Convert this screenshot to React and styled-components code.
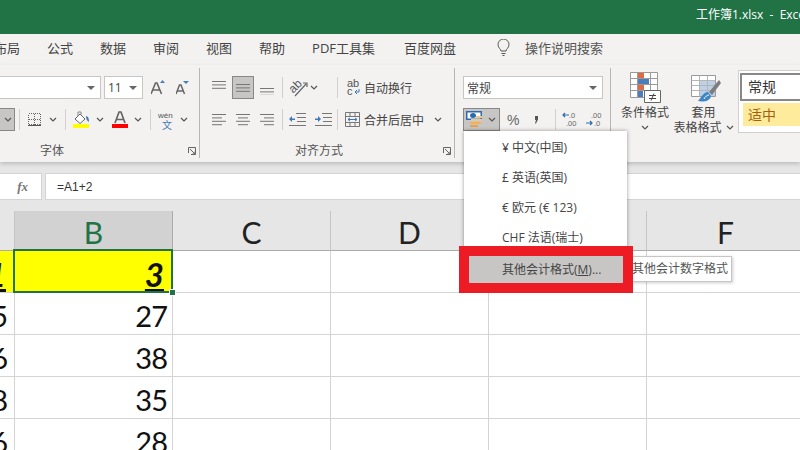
import React from 'react';
import styled, { createGlobalStyle } from 'styled-components';

const GlobalStyle = createGlobalStyle`
  html, body {
    margin: 0;
    padding: 0;
    background: #e6e6e6;
  }
`;

const uiFont = `"Open Sans", "Noto Sans CJK SC", sans-serif`;
const cellFont = `Lato, "Liberation Sans", sans-serif`;

const Page = styled.div`
  position: relative;
  display: flex;
  flex-direction: column;
  width: 800px;
  height: 450px;
  overflow: hidden;
  background: #e6e6e6;
  font-family: ${ uiFont };
  font-size: 12px;
  color: #444;
`;

const TitleBar = styled.div`
  flex: none;
  height: 34px;
  padding: 6px 0 0 696px;
  box-sizing: border-box;
  background: #217346;
  color: #fff;
  font-size: 12px;
  line-height: 18px;
  white-space: pre;
`;

const TabBar = styled.div`
  flex: none;
  display: flex;
  align-items: center;
  gap: 27px;
  height: 31px;
  margin-left: -6px;
  padding-bottom: 4px;
  box-sizing: border-box;
  background: #f3f2f1;
  font-size: 13px;
  color: #444;
`;

const Tab = styled.span`
  white-space: nowrap;
  margin-left: ${ p => p.$nudge ?? 0 }px;
`;

const SearchTab = styled.span`
  display: flex;
  align-items: center;
  gap: 15px;
  margin-left: 14px;
  color: #555;
`;

const Ribbon = styled.div`
  flex: none;
  position: relative;
  display: flex;
  height: 97px;
  background: #f3f2f1;
  box-shadow: 0 2px 4px rgba(0, 0, 0, 0.18);
`;

const Group = styled.div`
  flex: none;
  display: flex;
  flex-direction: column;
  gap: 9px;
  width: ${ p => p.$width }px;
  height: 90px;
  margin-top: 3px;
  padding-top: 8px;
  box-sizing: border-box;
  border-right: 1px solid #b8b6b4;
  overflow: hidden;
`;

const Row = styled.div`
  display: flex;
  align-items: center;
  justify-content: ${ p => p.$end ? 'flex-end' : 'flex-start' };
  flex: none;
  gap: ${ p => p.$gap ?? 0 }px;
  height: 23px;
  padding: ${ p => p.$end ? '0 6px 0 0' : `0 0 0 ${ p.$left ?? 0 }px` };
`;

const LabelRow = styled.div`
  display: flex;
  align-items: center;
  flex: none;
  height: 14px;
  margin-top: auto;
  padding-left: ${ p => p.$left }px;
  padding-right: 3px;
  font-size: 12px;
  line-height: 14px;
  color: #555;
`;

const Launcher = styled.span`
  display: flex;
  margin-left: auto;
`;

const ComboBox = styled.div`
  flex: none;
  display: flex;
  align-items: center;
  justify-content: space-between;
  width: ${ p => p.$width }px;
  height: 23px;
  margin-left: ${ p => p.$left ?? 0 }px;
  padding: 0 5px 0 3px;
  box-sizing: border-box;
  background: #fff;
  border: 1px solid #c8c6c4;
  color: #444;
  font-size: 12px;
`;

const Tool = styled.div`
  flex: none;
  display: flex;
  align-items: center;
  justify-content: ${ p => p.$pad === undefined ? 'center' : 'flex-start' };
  gap: ${ p => p.$gap ?? 0 }px;
  width: ${ p => p.$width }px;
  height: 23px;
  margin-left: ${ p => p.$left ?? 0 }px;
  padding-left: ${ p => p.$pad ?? 0 }px;
  box-sizing: border-box;
  white-space: nowrap;
  font-size: 12px;
  color: #444;
  background: ${ p => p.$active ? '#c8c6c4' : 'transparent' };
  border: ${ p => p.$active ? '1px solid #8a8886' : 'none' };
`;

const ChevronSlot = styled.span`
  display: flex;
  margin-left: 6px;
`;

const Sep = styled.span`
  flex: none;
  width: 1px;
  height: 21px;
  margin-left: ${ p => p.$left ?? 0 }px;
  background: #d2d0ce;
`;

const BigTool = styled.div`
  flex: none;
  display: flex;
  flex-direction: column;
  align-items: center;
  width: ${ p => p.$width }px;
  font-size: 12px;
  line-height: 15px;
  color: #444;
  white-space: nowrap;
`;

const BigIcon = styled.div`
  height: 33px;
`;

const BigLabel = styled.div`
  display: flex;
  align-items: center;
  gap: 4px;
  height: 15px;
`;

const StyleColumn = styled.div`
  display: flex;
  align-items: flex-start;
  height: 82px;
  margin-top: 7px;
  padding-left: 5px;
`;

const StyleBox = styled.div`
  flex: none;
  width: 80px;
  height: 63px;
  margin: -2px 0 0 5px;
  padding: 2px 0 0 1px;
  box-sizing: border-box;
  background: #fff;
  border: 1px solid #d2d0ce;
  border-right: none;
`;

const StyleNormal = styled.div`
  height: 28px;
  padding-left: 6px;
  box-sizing: border-box;
  border: 2px solid #8a8886;
  border-right: none;
  font-size: 14px;
  line-height: 24px;
  color: #333;
`;

const StyleNeutral = styled.div`
  height: 23px;
  margin: 2px 0 0 3px;
  padding-left: 5px;
  background: #ffeb9c;
  font-size: 14px;
  line-height: 23px;
  color: #a85f0a;
`;

const FormulaBar = styled.div`
  flex: none;
  display: flex;
  gap: 3px;
  height: 49px;
  padding: 11px 0;
  box-sizing: border-box;
`;

const NameBox = styled.div`
  flex: none;
  display: flex;
  align-items: center;
  justify-content: flex-end;
  width: 42px;
  padding-right: 13px;
  box-sizing: border-box;
  background: #fff;
  border: 1px solid #d4d4d4;
  border-left: none;
  font-family: "Liberation Serif", serif;
  font-style: italic;
  font-weight: bold;
  font-size: 13px;
  color: #777;
`;

const FormulaInput = styled.div`
  flex: 1;
  display: flex;
  align-items: center;
  padding: 1px 0 0 11px;
  background: #fff;
  border: 1px solid #d4d4d4;
  border-right: none;
  font-family: "Liberation Sans", sans-serif;
  font-size: 12px;
  color: #333;
`;

const Sheet = styled.div`
  flex: none;
  display: grid;
  grid-template-columns: 15px repeat(5, 158px);
  grid-template-rows: 40px repeat(5, 42px);
  background: #fff;
  font-family: ${ cellFont };
`;

const ColHead = styled.div`
  display: flex;
  align-items: center;
  justify-content: center;
  padding-top: 2px;
  box-sizing: border-box;
  font-size: 30px;
  background: ${ p => p.$selected ? '#d2d2d2' : '#e6e6e6' };
  color: ${ p => p.$selected ? '#217346' : '#222' };
  border-right: 1px solid ${ p => p.$selected ? '#ababab' : '#c6c6c6' };
  border-bottom: 1px solid #ababab;
`;

const Cell = styled.div`
  position: relative;
  z-index: ${ p => p.$fill ? 1 : 0 };
  display: flex;
  align-items: center;
  justify-content: flex-end;
  padding: 4px ${ p => p.$pad ?? 6 }px 0 0;
  box-sizing: border-box;
  font-size: 29px;
  letter-spacing: -1px;
  color: #111;
  background: ${ p => p.$fill ? '#ffff00' : '#fff' };
  border-right: 1px solid #d4d4d4;
  border-bottom: 1px solid #d4d4d4;
`;

const Emphasis = styled.span`
  font-size: 33px;
  font-weight: bold;
  font-style: italic;
  letter-spacing: 0;
  line-height: 34px;
  text-decoration: underline;
`;

const Selection = styled.div`
  position: absolute;
  inset: -2px -1px -1px -2px;
  border: 2px solid #217346;
`;

const FillHandle = styled.div`
  position: absolute;
  right: -5px;
  bottom: -5px;
  width: 7px;
  height: 7px;
  background: #217346;
  border: 1px solid #fff;
  box-sizing: border-box;
`;

const Menu = styled.div`
  position: absolute;
  left: 464px;
  top: 131px;
  width: 163px;
  height: 156px;
  padding-top: 2px;
  box-sizing: border-box;
  background: #fff;
  box-shadow: 0 0 4px rgba(0, 0, 0, 0.4);
`;

const MenuItem = styled.div`
  height: ${ p => p.$active ? 27 : 30 }px;
  margin: ${ p => p.$active ? '3px 4px 0 5px' : '0' };
  padding-left: ${ p => p.$active ? 33 : 38 }px;
  font-size: 12px;
  line-height: ${ p => p.$active ? 28 : 30 }px;
  color: #444;
  white-space: nowrap;
  background: ${ p => p.$active ? '#c8c6c4' : 'transparent' };
`;

const Mnemonic = styled.span`
  text-decoration: underline;
`;

const Tooltip = styled.div`
  position: absolute;
  left: 629px;
  top: 256px;
  width: 103px;
  height: 26px;
  padding-left: 2px;
  box-sizing: border-box;
  background: #fff;
  border: 1px solid #c8c6c4;
  box-shadow: 1px 1px 3px rgba(0, 0, 0, 0.2);
  font-size: 12px;
  line-height: 24px;
  color: #555;
  white-space: nowrap;
`;

const Callout = styled.div`
  position: absolute;
  left: 459px;
  top: 246px;
  width: 174px;
  height: 47px;
  box-sizing: border-box;
  border: 10px solid #ed1c24;
`;

const Chevron = () => (
  <svg width='8' height='5' viewBox='0 0 8 5'>
    <path d='M1 1l3 3 3-3' fill='none' stroke='#555' strokeWidth='1.2' />
  </svg>
);

const Caret = () => (
  <svg width='8' height='4' viewBox='0 0 8 4'>
    <path d='M0 0h8L4 4z' fill='#666' />
  </svg>
);

const DialogLauncher = () => (
  <svg width='8' height='8' viewBox='0 0 8 8'>
    <path d='M.5 6V.5H7.500V7.500H3M2 2l5 5M4.500 7H7V4.500' fill='none' stroke='#666' />
  </svg>
);

// each row is [x, width], drawn a little over 3px apart
const Lines = ({ rows, y = 0, h = 15 }) => (
  <svg width='15' height={ h } viewBox={ `0 0 15 ${ h }` }>
    { rows.map(([x, w], i) => (
      <rect key={ i } x={ x } y={ y + i * 3.4 } width={ w } height='1' fill='#767676' />
    )) }
  </svg>
);

const three = [[0, 14], [0, 14], [0, 14]];

const LeftLines = () => <Lines rows={ [[0, 14], [0, 10], [0, 14], [0, 10]] } h={ 12 } />;
const CenterLines = () => <Lines rows={ [[0, 14], [2, 10], [0, 14], [2, 10]] } h={ 12 } />;
const RightLines = () => <Lines rows={ [[0, 14], [4, 10], [0, 14], [4, 10]] } h={ 12 } />;

const Bulb = () => (
  <svg width='13' height='18' viewBox='0 0 13 18'>
    <path d='M4 12c0-2-3-3-3-6.500a5.500 5.500 0 0 1 11 0C12 9 9 10 9 12zM4.500 14.500h4M5.500 16.500h2' fill='none' stroke='#555' />
  </svg>
);

const GrowFont = () => (
  <svg width='15' height='15' viewBox='0 0 15 15'>
    <path d='M0 14L4.500 3h1.500L10.500 14M2 10h7' fill='none' stroke='#666' strokeWidth='1.600' />
    <path d='M9 3l2.500-3L14 3z' fill='#4a7ebb' />
  </svg>
);

const ShrinkFont = () => (
  <svg width='13' height='14' viewBox='0 0 13 14'>
    <path d='M0 13L3.500 4h1.500L8.500 13M1.500 10h5.500' fill='none' stroke='#666' strokeWidth='1.500' />
    <path d='M7 0h6l-3 3z' fill='#4a7ebb' />
  </svg>
);

const BorderGrid = () => (
  <svg width='13' height='13' viewBox='0 0 13 13' shapeRendering='crispEdges'>
    <path d='M.5 .5h12v11h-12zM.5 6h12M6.500 .5v11' fill='none' stroke='#666' strokeDasharray='1 1' />
    <path d='M0 12.500h13' stroke='#555' />
  </svg>
);

const FillColor = () => (
  <svg width='17' height='17' viewBox='0 0 17 17'>
    <path d='M7 3L2 8l5 4.500L12 8z' fill='#fff' stroke='#666' />
    <path d='M5 5V1h3v3' fill='none' stroke='#888' />
    <path d='M13 5c2 0 3 2 3 6-2-1-3-3-3-6z' fill='#3f78b5' />
    <rect y='13' width='16' height='4' fill='#ffff00' />
  </svg>
);

const FontColor = () => (
  <svg width='16' height='17' viewBox='0 0 16 17'>
    <path d='M3 12L7 1h2l4 11M5 8.500h6' fill='none' stroke='#666' strokeWidth='1.700' />
    <rect y='13' width='16' height='4' fill='#ff0000' />
  </svg>
);

const Phonetic = () => (
  <svg width='17' height='20' viewBox='0 0 17 20'>
    <text x='0' y='8' fontSize='8' fontFamily='Liberation Sans' fill='#555'>wén</text>
    <text x='4' y='19' fontSize='10' fontFamily='Noto Sans CJK SC' fill='#3f78b5'>文</text>
  </svg>
);

const Orientation = () => (
  <svg width='18' height='18' viewBox='0 0 18 18'>
    <text x='0' y='11' fontSize='12' fontFamily='Liberation Sans' fill='#555' transform='rotate(-45 6 9)'>ab</text>
    <path d='M5 17L16 5M13 4h4v4' fill='none' stroke='#666' strokeWidth='1.200' />
  </svg>
);

const WrapText = () => (
  <svg width='13' height='17' viewBox='0 0 13 17'>
    <text x='0' y='8' fontSize='11' fontFamily='Liberation Sans' fill='#555'>ab</text>
    <text x='0' y='16' fontSize='11' fontFamily='Liberation Sans' fill='#555'>c</text>
    <path d='M12 10v3H8M10 11l-2 2 2 2' fill='none' stroke='#3f78b5' />
  </svg>
);

const Indent = ({ flip }) => (
  <svg width='17' height='13' viewBox='0 0 17 13'>
    <path d='M7 .5h10M8 4.500h9M8 8.500h9M0 12.500h17' fill='none' stroke='#777' />
    <path d={ flip ? 'M0 5.500h3V3l3 3-3 3V7H0z' : 'M6 5.500H3V3L0 6l3 3V7h3z' } fill='#3f78b5' />
  </svg>
);

const MergeCenter = () => (
  <svg width='15' height='15' viewBox='0 0 15 15'>
    <path d='M.5 .5h14v14H.5zM.5 4.500h14M.5 10.500h14M5 .5v4M10 .5v4M5 10.500v4M10 10.500v4' fill='none' stroke='#777' />
    <path d='M3 7.500h9M5 6L3 7.500 5 9M10 6l2 1.500L10 9' fill='none' stroke='#3f78b5' />
  </svg>
);

const Accounting = () => (
  <svg width='17' height='17' viewBox='0 0 17 17'>
    <rect x='0' y='0' width='16' height='9' fill='#2b6cb0' />
    <rect x='1.500' y='1.500' width='13' height='6' fill='#fff' />
    <ellipse cx='7' cy='4.500' rx='3' ry='2.500' fill='#2b6cb0' />
    <rect x='10' y='5' width='6' height='2' fill='#ecc88f' />
    <rect x='5' y='8' width='11' height='2' fill='#ecc88f' />
    <rect x='4' y='11' width='11' height='2' fill='#eeb25f' />
    <rect x='4' y='14' width='8' height='2' fill='#eaa24a' />
  </svg>
);

const Percent = () => (
  <svg width='14' height='12' viewBox='0 0 14 12'>
    <text x='0' y='11' fontSize='14' fontFamily='Liberation Sans' fill='#666'>%</text>
  </svg>
);

const Comma = () => (
  <svg width='5' height='8' viewBox='0 0 5 8'>
    <path d='M1 0h3v3.500L2 7.500H1l1-3.500H1z' fill='#555' />
  </svg>
);

const Decimal = ({ increase }) => (
  <svg width='16' height='15' viewBox='0 0 16 15'>
    <text x={ increase ? 5 : 7 } y='6' fontSize='7.500' fontFamily='Liberation Sans' fill='#666'>{ increase ? '.00' : '.0' }</text>
    <text x={ increase ? 8 : 4 } y='14' fontSize='7.500' fontFamily='Liberation Sans' fill='#666'>{ increase ? '.0' : '.00' }</text>
    <path d={ increase ? 'M0 11h6M4 9l2 2-2 2' : 'M1 3h6M3 1L1 3l2 2' } fill='none' stroke='#2b6cb0' strokeWidth='1.200' />
  </svg>
);

const ConditionalFormat = () => (
  <svg width='31' height='31' viewBox='0 0 31 31'>
    <path d='M.5 .5h27v25H.5zM.5 6.500h27M.5 12.500h27M.5 18.500h27M7.500 .5v25M20.500 .5v25' fill='#fff' stroke='#9a9a9a' />
    <rect x='8' y='1' width='6' height='5' fill='#de6c43' />
    <rect x='8' y='7' width='11' height='5' fill='#4a7ebb' />
    <rect x='8' y='13' width='6' height='5' fill='#de6c43' />
    <rect x='8' y='19' width='5' height='6' fill='#4a7ebb' />
    <path d='M14.500 18.500h16v12h-16z' fill='#fff' stroke='#666' />
    <path d='M19 23.500h7M19 26.500h7M24 21.500l-3 7' fill='none' stroke='#444' />
  </svg>
);

const TableFormat = () => (
  <svg width='31' height='31' viewBox='0 0 31 31' style={ { marginLeft: 5 } }>
    <path d='M.5 3.500h24v21H.5z' fill='#fff' stroke='#9a9a9a' />
    <rect x='8' y='9' width='16' height='15' fill='#bcd0e6' />
    <path d='M.5 8.500h24M.5 13.500h24M.5 18.500h24M8.500 3.500v21M16.500 3.500v21' fill='none' stroke='#b5b5b5' />
    <path d='M28 8L18 20l3 3L30 11z' fill='#7d7d7d' />
    <path d='M17 20c-4 0-6 4-10 9 4 1 12 1 13-5z' fill='#3f86c6' />
    <path d='M13 27c1-2 3-4 5-4' fill='none' stroke='#fff' />
  </svg>
);

const FontGroup = () => (
  <Group $width={ 200 }>
    <Row $end>
      <ComboBox $width={ 120 }><span /><Caret /></ComboBox>
      <ComboBox $width={ 39 } $left={ 3 }>11<Caret /></ComboBox>
      <Tool $width={ 25 } $left={ 3 }><GrowFont /></Tool>
      <Tool $width={ 22 }><ShrinkFont /></Tool>
    </Row>
    <Row $end>
      <Tool $active $width={ 30 } $pad={ 18 }><Chevron /></Tool>
      <Sep $left={ 4 } />
      <Tool $width={ 45 } $pad={ 8 } $gap={ 8 }><BorderGrid /><Chevron /></Tool>
      <Sep />
      <Tool $width={ 39 } $pad={ 7 } $gap={ 6 }><FillColor /><Chevron /></Tool>
      <Tool $width={ 45 } $pad={ 7 } $gap={ 6 }><FontColor /><Chevron /></Tool>
      <Sep />
      <Tool $width={ 42 } $pad={ 7 } $gap={ 5 }><Phonetic /><Chevron /></Tool>
    </Row>
    <LabelRow $left={ 40 }>字体<Launcher><DialogLauncher /></Launcher></LabelRow>
  </Group>
);

const AlignGroup = () => (
  <Group $width={ 255 }>
    <Row $left={ 8 } $gap={ 2 }>
      <Tool $width={ 22 }><Lines rows={ three } h={ 16 } y={ 1 } /></Tool>
      <Tool $active $width={ 22 }><Lines rows={ three } h={ 10 } y={ 1 } /></Tool>
      <Tool $width={ 22 }><Lines rows={ three } h={ 14 } y={ 7 } /></Tool>
      <Sep $left={ 2 } />
      <Tool $width={ 50 } $pad={ 5 } $gap={ 2 }><Orientation /><Chevron /></Tool>
      <Sep />
      <Tool $width={ 90 } $pad={ 7 } $gap={ 4 }><WrapText />自动换行</Tool>
    </Row>
    <Row $left={ 8 } $gap={ 2 }>
      <Tool $width={ 22 }><LeftLines /></Tool>
      <Tool $width={ 22 }><CenterLines /></Tool>
      <Tool $width={ 22 }><RightLines /></Tool>
      <Sep $left={ 2 } />
      <Tool $width={ 24 }><Indent /></Tool>
      <Tool $width={ 24 }><Indent flip /></Tool>
      <Sep />
      <Tool $width={ 104 } $pad={ 5 } $gap={ 4 }>
        <MergeCenter />合并后居中<ChevronSlot><Chevron /></ChevronSlot>
      </Tool>
    </Row>
    <LabelRow $left={ 95 }>对齐方式<Launcher><DialogLauncher /></Launcher></LabelRow>
  </Group>
);

const NumberGroup = () => (
  <Group $width={ 156 }>
    <Row $left={ 8 }>
      <ComboBox $width={ 140 }>常规<Caret /></ComboBox>
    </Row>
    <Row $left={ 8 }>
      <Tool $active $width={ 37 } $pad={ 2 } $gap={ 5 }><Accounting /><Chevron /></Tool>
      <Tool $width={ 24 } $left={ 2 }><Percent /></Tool>
      <Tool $width={ 19 } $left={ 1 }><Comma /></Tool>
      <Sep $left={ 9 } />
      <Tool $width={ 22 } $left={ 3 }><Decimal /></Tool>
      <Tool $width={ 22 } $left={ 2 }><Decimal increase /></Tool>
    </Row>
  </Group>
);

const StylesGroup = () => (
  <StyleColumn>
    <BigTool $width={ 58 }>
      <BigIcon><ConditionalFormat /></BigIcon>
      <BigLabel>条件格式</BigLabel>
      <BigLabel><Chevron /></BigLabel>
    </BigTool>
    <BigTool $width={ 59 }>
      <BigIcon><TableFormat /></BigIcon>
      <BigLabel>套用</BigLabel>
      <BigLabel>表格格式<Chevron /></BigLabel>
    </BigTool>
    <StyleBox>
      <StyleNormal>常规</StyleNormal>
      <StyleNeutral>适中</StyleNeutral>
    </StyleBox>
  </StyleColumn>
);

const columns = ['', 'B', 'C', 'D', 'E', 'F'];
const rows = [
  ['1', '3'],
  ['5', '27'],
  ['6', '38'],
  ['8', '35'],
  ['6', '28']
];

const renderRow = ([a, b], index) => {
  const first = index === 0;

  return (
    <React.Fragment key={ index }>
      <Cell $fill={ first } $pad={ first ? 8 : 7 }>{ first ? <Emphasis>{ a }</Emphasis> : a }</Cell>
      <Cell $fill={ first } $pad={ first ? 8 : 5 }>
        { first ? <Emphasis>{ b }</Emphasis> : b }
        { first && <Selection><FillHandle /></Selection> }
      </Cell>
      <Cell /><Cell /><Cell /><Cell />
    </React.Fragment>
  );
};

const App = () => (
  <Page>
    <GlobalStyle />

    <TitleBar>{ '工作簿1.xlsx  -  Excel' }</TitleBar>

    <TabBar>
      <Tab>布局</Tab>
      <Tab>公式</Tab>
      <Tab>数据</Tab>
      <Tab>审阅</Tab>
      <Tab>视图</Tab>
      <Tab>帮助</Tab>
      <Tab>PDF工具集</Tab>
      <Tab $nudge={ 2 }>百度网盘</Tab>
      <SearchTab><Bulb />操作说明搜索</SearchTab>
    </TabBar>

    <Ribbon>
      <FontGroup />
      <AlignGroup />
      <NumberGroup />
      <StylesGroup />
    </Ribbon>

    <FormulaBar>
      <NameBox>fx</NameBox>
      <FormulaInput>=A1+2</FormulaInput>
    </FormulaBar>

    <Sheet>
      { columns.map((name, i) => <ColHead key={ i } $selected={ name === 'B' }>{ name }</ColHead>) }
      { rows.map(renderRow) }
    </Sheet>

    <Menu>
      <MenuItem>¥ 中文(中国)</MenuItem>
      <MenuItem>£ 英语(英国)</MenuItem>
      <MenuItem>€ 欧元 (€ 123)</MenuItem>
      <MenuItem>CHF 法语(瑞士)</MenuItem>
      <MenuItem $active>其他会计格式(<Mnemonic>M</Mnemonic>)...</MenuItem>
    </Menu>

    <Tooltip>其他会计数字格式</Tooltip>
    <Callout />
  </Page>
);

export default App;
